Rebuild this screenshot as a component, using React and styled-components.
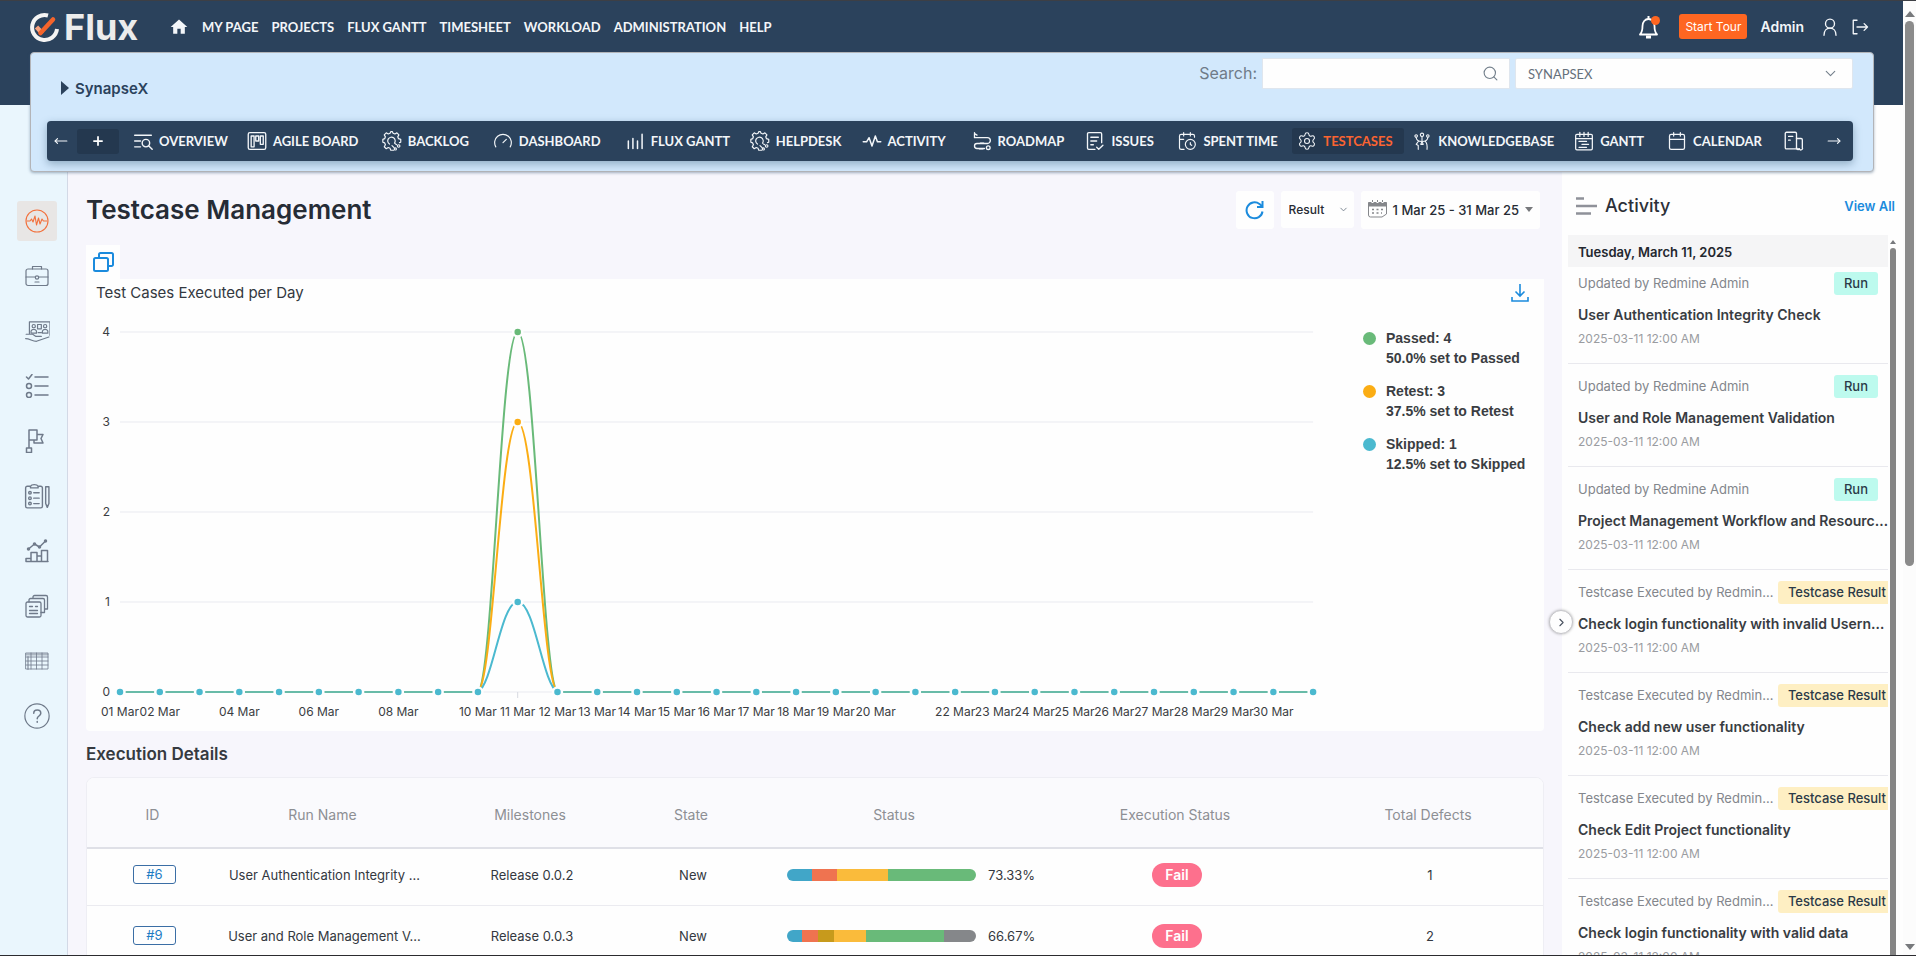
import React from "react";
import styled, { createGlobalStyle } from "styled-components";
import {
  Calendar,
  CalendarClock,
  ChevronDown,
  ChevronRight,
  Gauge,
  MoveLeft,
  MoveRight,
  Plus,
  Search,
  Settings,
} from "lucide-react";
import { MdHome } from "react-icons/md";

const GlobalStyle = createGlobalStyle`
  * {
    box-sizing: border-box;
  }

  body {
    margin: 0;
    overflow: hidden;
    font-family: Inter, "Open Sans", sans-serif;
    color: #333840;
  }

  button,
  input,
  select {
    font-family: inherit;
  }

  a {
    text-decoration: none;
  }
`;

/* ---------- page ---------- */

const Page = styled.div`
  display: flex;
  height: 100vh;
  border-top: 1px solid #3d3f45;
  border-bottom: 1px solid #2b2b2f;
`;

const Screen = styled.div`
  flex: 1;
  min-width: 0;
  display: flex;
  flex-direction: column;
  overflow: hidden;
  background: linear-gradient(#2b425c, #2b425c) 0 0 / 100% 104px no-repeat,
    linear-gradient(90deg, #eaf6fd 0 67px, #fefefe 67px);
`;

const PageScroll = styled.div`
  display: flex;
  flex-direction: column;
  justify-content: space-between;
  align-items: center;
  width: 13px;
  padding: 10px 0 5px;
  background: #fcfcfc;
`;

const Triangle = styled.span`
  border: ${(props) => props.size}px solid transparent;
  border-${(props) => (props.up ? "bottom" : "top")}: ${(props) => props.size + 1}px solid #77797c;
  border-${(props) => (props.up ? "top" : "bottom")}-width: 0;
`;

const PageThumb = styled.div`
  width: 9px;
  height: 58%;
  margin-top: 4px;
  margin-bottom: auto;
  border-radius: 5px;
  background: #8b8b8b;
`;

/* ---------- top bar ---------- */

const TopBar = styled.header`
  display: flex;
  align-items: center;
  height: 51px;
  flex-shrink: 0;
  padding: 0 34px 0 28px;
  color: #f3f6f9;
`;

const Logo = styled.a`
  display: flex;
  align-items: center;
  gap: 4px;
  width: 141px;
  font-size: 36px;
  font-weight: 700;
  line-height: 36px;
  color: #ececec;
`;

const TopNav = styled.nav`
  display: flex;
  align-items: center;
  gap: 13px;
  flex: 1;
  font-family: Lato, sans-serif;
`;

const TopLink = styled.a`
  display: flex;
  font-size: 13px;
  font-weight: 700;
  line-height: 18px;
  color: #f3f6f9;
`;

const UserTools = styled.div`
  display: flex;
  align-items: center;
`;

const IconButton = styled.button`
  display: flex;
  padding: 0;
  border: 0;
  background: none;
  color: inherit;
  cursor: pointer;

  & + & {
    margin-left: 12px;
  }
`;

const TourButton = styled.button`
  height: 25px;
  margin: 0 13px 0 18px;
  padding: 0 6px;
  border: 0;
  border-radius: 3px;
  background: #fe6621;
  color: #fff;
  font-size: 12px;
  line-height: 24px;
`;

const UserName = styled.a`
  margin-right: 17px;
  color: #f3f6f9;
  font-size: 14px;
  font-weight: 600;
`;

/* ---------- project panel ---------- */

const ProjectPanel = styled.section`
  position: relative;
  z-index: 2;
  flex-shrink: 0;
  margin: 0 29px 0 30px;
  padding: 0 20px 10px 16px;
  border: 1px solid #b3b4b8;
  border-radius: 4px;
  background: #d2e8fc;
  box-shadow: 0 1px 3px rgba(60, 90, 120, 0.45);
`;

const ProjectRow = styled.div`
  display: flex;
  justify-content: space-between;
  align-items: center;
  height: 68px;
`;

const ProjectName = styled.h2`
  display: flex;
  align-items: center;
  gap: 6px;
  margin: 2px 0 0 14px;
  font-size: 15px;
  font-weight: 600;
  color: #2b425c;

  &::before {
    content: "";
    border: 7px solid transparent;
    border-left: 8px solid #2b425c;
    border-right-width: 0;
  }
`;

const SearchArea = styled.div`
  display: flex;
  align-self: flex-start;
  padding-top: 5px;
  gap: 5px;
`;

const SearchLabel = styled.label`
  font-size: 16px;
  line-height: 30px;
  color: #6f7b88;
`;

const Field = styled.div`
  display: grid;
  align-items: center;
  width: ${(props) => props.width}px;

  > * {
    grid-area: 1 / 1;
  }

  > svg {
    justify-self: end;
    margin-right: ${(props) => props.inset}px;
    pointer-events: none;
    color: #74808c;
  }
`;

const SearchInput = styled.input`
  width: 100%;
  height: 31px;
  padding: 0 36px 0 10px;
  border: 1px solid #dfe6ee;
  background: #fefefe;
`;

const ProjectSelect = styled.select`
  width: 100%;
  height: 31px;
  padding: 0 12px;
  border: 1px solid #dfe6ee;
  border-radius: 2px;
  background: #fefefe;
  appearance: none;
  color: #66707b;
  font-family: Lato, sans-serif;
  font-size: 13px;
`;

const TabBar = styled.nav`
  display: flex;
  align-items: center;
  height: 40px;
  padding: 0 12px 0 7px;
  border-radius: 4px;
  background: #2b425c;
  box-shadow: 0 3px 8px rgba(43, 80, 110, 0.4);
  color: #f3f6f9;
`;

const AddTab = styled.button`
  display: flex;
  align-items: center;
  justify-content: center;
  width: 42px;
  height: 25px;
  margin: 0 9px;
  padding: 0;
  border: 0;
  border-radius: 3px;
  background: #24384f;
  color: #fff;
`;

const TabSlot = styled.div`
  flex: ${(props) => props.grow} 1 0;
  min-width: 0;
  display: flex;
`;

const Tab = styled.a`
  display: flex;
  align-items: center;
  gap: 6px;
  height: 26px;
  padding: 0 11px 0 5px;
  border-radius: 3px;
  font-family: Lato, sans-serif;
  font-size: 13px;
  font-weight: 700;
  white-space: nowrap;
  color: ${(props) => (props.$active ? "#fb6431" : "#f3f6f9")};
  background: ${(props) => (props.$active ? "#24384f" : "none")};

  svg {
    flex-shrink: 0;
    color: #f3f6f9;
  }
`;

/* ---------- body ---------- */

const Body = styled.div`
  display: flex;
  flex: 1;
  min-height: 0;
`;

const Sidebar = styled.nav`
  display: flex;
  flex-direction: column;
  align-items: center;
  gap: 15px;
  width: 68px;
  flex-shrink: 0;
  padding: 29px 0 0 7px;
  border-right: 1px solid #d3d9e6;
  background: #eaf6fd;
`;

const SideLink = styled.a`
  display: flex;
  align-items: center;
  justify-content: center;
  width: 40px;
  height: 40px;
  border-radius: 3px;
  color: ${(props) => (props.$active ? "#f2703c" : "#6f7a8a")};
  background: ${(props) => (props.$active ? "#e8e6e5" : "none")};
`;

const Main = styled.main`
  flex: 1;
  min-width: 0;
  padding: 18px 18px 0;
  background: #f7f6fc;
  overflow: hidden;
`;

const TitleRow = styled.div`
  display: flex;
  align-items: center;
  justify-content: space-between;
  height: 39px;
`;

const Title = styled.h1`
  margin: 0;
  font-size: 26px;
  font-weight: 600;
  line-height: 39px;
  color: #262c36;
`;

const Filters = styled.div`
  display: flex;
  align-items: center;
  gap: 7px;
  margin-right: 4px;
`;

const FilterButton = styled.button`
  display: flex;
  align-items: center;
  gap: 6px;
  height: 38px;
  padding: 0 ${(props) => props.pad}px;
  border: 0;
  border-radius: 3px;
  background: #fefefe;
  color: #262b33;
  font-size: 13px;
  font-weight: 500;
  white-space: nowrap;
`;

const ResultSelect = styled.select`
  width: 100%;
  height: 37px;
  padding: 0 8px;
  border: 0;
  border-radius: 3px;
  background: #fefefe;
  appearance: none;
  color: #262b33;
  font-size: 12px;
  font-weight: 500;
`;

const CopyTab = styled.button`
  display: flex;
  align-items: center;
  justify-content: center;
  width: 34px;
  height: 34px;
  margin-top: 16px;
  padding: 0;
  border: 0;
  background: #fefefe;
`;

const ChartCard = styled.section`
  padding: 4px 0 7px;
  border-radius: 0 0 4px 4px;
  background: #fefefe;
`;

const ChartHead = styled.div`
  display: flex;
  justify-content: space-between;
  height: 33px;
  padding: 0 15px 0 10px;
`;

const ChartTitle = styled.h3`
  margin: 0;
  font-size: 15px;
  font-weight: 400;
  line-height: 20px;
`;

const ChartBody = styled.div`
  display: grid;
  grid-template-columns: 1258fr 200fr;
`;

const Plot = styled.svg`
  display: block;
  width: 100%;

  text {
    font-size: 12px;
    fill: #3a3d42;
  }
`;

const Legend = styled.ul`
  margin: 0;
  padding: 12px 0 0 19px;
  list-style: none;
  font-family: "Liberation Sans", Arial, sans-serif;
  font-size: 14px;
  font-weight: 700;
  line-height: 20px;
  white-space: nowrap;
  color: #3a3d42;
`;

const LegendItem = styled.li`
  display: flex;
  gap: 10px;
  margin-bottom: 13px;

  &::before {
    content: "";
    width: 13px;
    height: 13px;
    margin-top: 4px;
    border-radius: 50%;
    background: ${(props) => props.color};
  }
`;

const SectionTitle = styled.h3`
  margin: 0;
  font-size: 17px;
  font-weight: 600;
  line-height: 46px;
  color: #363a40;
`;

const TableCard = styled.div`
  border: 1px solid #eeeef4;
  border-radius: 8px 8px 0 0;
  background: #fefefe;
  overflow: hidden;
`;

const Table = styled.table`
  width: 100%;
  table-layout: fixed;
  border-collapse: collapse;
  text-align: center;
  font-size: 13px;

  th {
    height: 70px;
    padding: 3px 0 0;
    border-bottom: 2px solid #dfe0e7;
    background: #fafafd;
    color: #8d8f94;
    font-size: 14px;
    font-weight: 400;
  }

  td {
    height: 61px;
    padding: 0 0 0 4px;
    border-bottom: 1px solid #ebebf0;
  }

  tbody tr:first-child td {
    height: 57px;
    padding-bottom: 4px;
  }
`;

const IdLink = styled.a`
  display: inline-block;
  width: 43px;
  border: 1px solid #3b6ea5;
  border-radius: 3px;
  line-height: 17px;
  color: #1d7cc4;
`;

const StatusCell = styled.div`
  display: flex;
  align-items: center;
  gap: 12px;
  padding-left: 34px;
`;

const Bar = styled.div`
  display: flex;
  width: 189px;
  height: 12px;
  border-radius: 6px;
  overflow: hidden;
`;

const BarPart = styled.span`
  flex: ${(props) => props.share} 1 0;
  background: ${(props) => props.color};
`;

const FailBadge = styled.span`
  display: inline-block;
  padding: 0 13px;
  border-radius: 12px;
  background: #fd708d;
  color: #fff;
  font-size: 14px;
  font-weight: 600;
  line-height: 24px;
`;

/* ---------- activity ---------- */

const ActivityPanel = styled.aside`
  position: relative;
  display: flex;
  flex-direction: column;
  width: 341px;
  flex-shrink: 0;
  padding-left: 6px;
  background: #fefefe;
`;

const CollapseButton = styled.button`
  position: absolute;
  top: 438px;
  left: -13px;
  display: flex;
  align-items: center;
  justify-content: center;
  width: 24px;
  height: 24px;
  padding: 0;
  border: 1px solid #c6c6ca;
  border-radius: 50%;
  background: #fefefe;
  box-shadow: 0 0 3px rgba(0, 0, 0, 0.3);
  color: #4a5260;
`;

const ActivityHead = styled.div`
  display: flex;
  align-items: center;
  height: 63px;
  flex-shrink: 0;
  padding: 4px 8px 0 8px;
`;

const ActivityTitle = styled.h2`
  flex: 1;
  margin: 0 0 0 8px;
  font-size: 18px;
  font-weight: 500;
  color: #2c3038;
`;

const ViewAll = styled.a`
  font-size: 13px;
  font-weight: 600;
  color: #1b8bdd;
`;

const ListFrame = styled.div`
  display: flex;
  flex: 1;
  min-height: 0;
  padding-right: 7px;
`;

const List = styled.div`
  flex: 1;
  min-width: 0;
  margin-right: 2px;
  overflow: hidden;
`;

const ListScroll = styled.div`
  display: flex;
  flex-direction: column;
  align-items: center;
  width: 6px;
  padding-top: 5px;
`;

const ListThumb = styled.div`
  width: 6px;
  flex: 1;
  margin-top: 4px;
  border-radius: 3px 3px 0 0;
  background: #858585;
`;

const DateRow = styled.div`
  padding: 2px 0 0 10px;
  background: #f5f5f6;
  font-size: 13px;
  font-weight: 600;
  line-height: 30px;
  color: #23272e;
`;

const Entry = styled.article`
  padding: 11px 0 14px 10px;
  border-bottom: 1px solid #e9e9ee;
  white-space: nowrap;

  &:nth-child(2) {
    padding-top: 5px;
  }
`;

const EntryTop = styled.div`
  display: flex;
  align-items: center;
  justify-content: space-between;
`;

const Author = styled.span`
  font-size: 13px;
  line-height: 23px;
  color: #83868c;
`;

const Tag = styled.span`
  margin-right: ${(props) => (props.run ? 10 : 0)}px;
  padding: 0 ${(props) => (props.run ? 10 : 2)}px 0 10px;
  border-radius: ${(props) => (props.run ? "3px" : "3px 0 0 3px")};
  background: ${(props) => (props.run ? "#bdfaee" : "#feefc3")};
  color: #2b3a48;
  font-size: 13px;
  font-weight: 500;
  line-height: 23px;
`;

const EntryTitle = styled.h4`
  margin: 9px 0 3px;
  font-size: 14px;
  font-weight: 600;
  line-height: 22px;
  color: #383c42;
`;

const EntryTime = styled.time`
  display: block;
  font-size: 12px;
  line-height: 20px;
  color: #9a9ca1;
`;

/* ---------- icons ---------- */

const Icon = ({ size = 20, width = 1.3, box = 24, children }) => (
  <svg
    width={size}
    height={size}
    viewBox={`0 0 ${box} ${box}`}
    fill="none"
    stroke="currentColor"
    strokeWidth={width}
    strokeLinecap="round"
    strokeLinejoin="round"
    aria-hidden="true"
  >
    {children}
  </svg>
);

const LogoMark = () => (
  <svg width="32" height="32" viewBox="0 0 32 32" fill="none" aria-hidden="true">
    <path d="M20 4.500A12.500 12.500 0 1 0 29 18" stroke="#f4f4f4" strokeWidth="4" />
    <path d="M8.500 16l6 6.500" stroke="#f9a27e" strokeWidth="4.500" />
    <path d="M12.500 22L25 8.500" stroke="#f5642b" strokeWidth="4.500" strokeLinecap="round" />
  </svg>
);

const BellIcon = () => (
  <svg width="24" height="28" viewBox="0 0 24 28" fill="none" aria-hidden="true">
    <path
      d="M3 21.500h17c-2-2-2.500-4-2.500-8.500 0-4-2.500-7-6-7s-6 3-6 7c0 4.500-.500 6.500-2.500 8.500z"
      stroke="#fff"
      strokeWidth="1.800"
      strokeLinejoin="round"
    />
    <path d="M11.500 3v3" stroke="#fff" strokeWidth="2" />
    <path d="M9 24h5" stroke="#fff" strokeWidth="3" />
    <circle cx="18.500" cy="7.500" r="4.500" fill="#fe6621" />
  </svg>
);

const UserIcon = () => (
  <Icon size={18} width={1.8}>
    <circle cx="12" cy="7.500" r="6" />
    <path d="M4 23c0-6 3.500-9.500 8-9.500s8 3.500 8 9.500" />
  </Icon>
);

const LogoutIcon = () => (
  <Icon size={18} width={1.8}>
    <path d="M8 3H3v18h5M8 12h14M17.500 7.500L22 12l-4.500 4.500" />
  </Icon>
);

const OverviewIcon = () => (
  <Icon width={1.7}>
    <path d="M2 5h20M2 12h7M2 19h7" />
    <circle cx="15.500" cy="14.500" r="4.500" />
    <path d="M19 18l4 4" />
  </Icon>
);

const BoardIcon = () => (
  <Icon width={1.6}>
    <rect x="1.500" y="2" width="21" height="20" rx="2" />
    <path d="M5 6h3.500v13H5zM10.500 6h3.500v6h-3.500zM16 6h3.500v10H16z" />
  </Icon>
);

/* toothed wheel with an open lower right corner */
const GearIcon = () => (
  <Icon width={1.4}>
    <path d="M21 14l1.500-.500v-3.500l-2.700-.800-.900-2.200 1.400-2.400-2.400-2.400L15.500 3.600l-2.200-.900L12.500 0.800h-2l-.800 1.900-2.200.900-2.400-1.400-2.400 2.400 1.400 2.400-.900 2.200-2.200.800v3.500l2.200.800.900 2.200-1.400 2.400 2.400 2.400 2.400-1.400 2.200.900.800 2.300h3.500" />
    <path d="M15 14.500a4.500 4.500 0 1 0-6 1.200M15 14.500l2.500 2M12 17.500l2.500 2.500" />
    <circle cx="20" cy="18" r="1.500" />
    <circle cx="16" cy="21.500" r="1.300" />
  </Icon>
);

const BarsIcon = () => (
  <Icon width={1.8}>
    <path d="M4 12v9M9.500 9v12M15 12v9M20.500 4v17" />
  </Icon>
);

const PulseIcon = () => (
  <Icon width={1.8}>
    <path d="M1.500 13h4l3-5 3.500 10 4-12 2.500 7h4" />
  </Icon>
);

const RoadmapIcon = () => (
  <Icon width={1.6}>
    <path d="M3 2v6h15.500a3.500 3.500 0 0 1 0 7H6a3 3 0 0 0 0 6h9M3 3l3 2" />
    <circle cx="19.500" cy="20" r="2.200" />
    <path d="M10 14.500h4M9 21.500h4" />
  </Icon>
);

const IssuesIcon = () => (
  <Icon width={1.6}>
    <path d="M12 22H4.500A1.500 1.500 0 0 1 3 20.500v-17A1.500 1.500 0 0 1 4.500 2h14A1.500 1.500 0 0 1 20 3.500V14" />
    <path d="M7 7.500h9M7 12h7M7 16.500h3M14 19.500l2.500 2.500 5-5" />
  </Icon>
);

const KnowledgeIcon = () => (
  <Icon width={1.3}>
    <circle cx="12" cy="4.500" r="2" />
    <circle cx="5" cy="6" r="1.500" />
    <circle cx="19" cy="6" r="1.500" />
    <path d="M12 6.500v6M5 7.500c0 4 3 5 7 5s7-1 7-5M8 12l-3 4 2.500 1.500V22M16 12.500c2 2 2.500 5 2 9.500M12 13l-1.500 3h3z" />
  </Icon>
);

const GanttIcon = () => (
  <Icon width={1.5}>
    <rect x="2" y="4" width="20" height="18.500" rx="1.500" />
    <path d="M2 9h20M7 1.500v5M12 1.500v5M17 1.500v5M6 12.500h9M9.500 16h8M6 19.500h9" />
  </Icon>
);

const NewsIcon = () => (
  <Icon width={1.6}>
    <path d="M18.500 21.500H3A1.500 1.500 0 0 1 1.500 20V3A1.500 1.500 0 0 1 3 1.500h10.500A1.500 1.500 0 0 1 15 3v17" />
    <path d="M15 9h5.500A1.500 1.500 0 0 1 22 10.500V20a1.500 1.500 0 0 1-3.500 1.500A2 2 0 0 1 15 20M5.500 6.500h5M5.500 11h2" />
  </Icon>
);

const sideIcons = {
  Activity: (
    <Icon size={24} width={1.1}>
      <circle cx="12" cy="12" r="11" />
      <path d="M2 12h3l1.500-2 1.500 3 2-6 1.500 9 2-7 1.500 6 2-5 1.500 2H22" />
    </Icon>
  ),
  Projects: (
    <Icon size={24} width={1.2}>
      <rect x="1" y="5" width="22" height="16.500" rx="2" />
      <path d="M7.500 5V2.500h9V5M1 13h9.500M13.500 13H23M10 18h4" />
      <circle cx="12" cy="13.500" r="1.700" />
    </Icon>
  ),
  Resources: (
    <Icon size={26} width={1.1}>
      <path d="M5 14V3.500h19V16M2 15h6l3 2h5M1.500 19c4 0 6 2.500 10 2.500L23 17.500" />
      <circle cx="9" cy="7.500" r="1.500" />
      <circle cx="19.500" cy="7.500" r="1.500" />
      <path d="M6.500 14v-2c1-2 4-2 5 0v2zM17 14v-2c1-2 4-2 5 0v2zM12.500 6h3.500v4h-3.500zM13 13.500h3" />
    </Icon>
  ),
  Tasks: (
    <Icon size={24} width={1.5}>
      <path d="M1.500 3L3.500 5l3.500-4.500M10 3h13M10 12h13M10 21h13" />
      <circle cx="4" cy="12" r="2.500" />
      <circle cx="4" cy="21" r="2.500" />
    </Icon>
  ),
  Milestones: (
    <Icon size={24} width={1.5}>
      <path d="M4 18.500V1h8v10H4M1.500 19h5v4.500h-5zM12 5.500h6l-2 4 2 4.500h-9v-3" />
    </Icon>
  ),
  Reports: (
    <Icon size={26} width={1.3}>
      <path d="M6 3H3a1.500 1.500 0 0 0-1.500 1.500v17A1.500 1.500 0 0 0 3 23h12.500a1.500 1.500 0 0 0 1.500-1.500v-17A1.500 1.500 0 0 0 15.500 3H13c-1-2-6-2-7 0v1.500h7V3M20 3.500h3V19l-1.500 3.500L20 19z" />
      <circle cx="5.500" cy="9" r="1.200" />
      <circle cx="5.500" cy="14" r="1.200" />
      <circle cx="5.500" cy="19" r="1.200" />
      <path d="M9 9h5M9 14h5M9 19h5" />
    </Icon>
  ),
  Analytics: (
    <Icon size={24} width={1.5}>
      <path d="M1 22.500v-3h5v3zM6 22.500v-9h6v9zM12 22.500V17h4.500v5.500zM16.500 22.500v-11H22.500v11zM1 22.500h22M3.500 10l6-5 5 3L21 1.500" />
      <circle cx="3.500" cy="10" r="1" />
      <circle cx="9.500" cy="5" r="1" />
      <circle cx="14.500" cy="8" r="1" />
      <circle cx="20.500" cy="2" r="1" />
    </Icon>
  ),
  Documents: (
    <Icon size={24} width={1.3}>
      <rect x="1" y="8" width="15" height="15" rx="1.500" />
      <path d="M4 8V6A1.500 1.500 0 0 1 5.500 4.500H18A1.500 1.500 0 0 1 19.500 6v12.500H16M8 4.500V3a1.500 1.500 0 0 1 1.500-1.500H21A1.500 1.500 0 0 1 22.500 3v12h-3M4.500 12.500h3M10.500 12.500h2M4.500 16.500h8M4.500 19.500h8" />
    </Icon>
  ),
  Tables: (
    <Icon size={24} width={0.8}>
      <rect x="1" y="4" width="22" height="16" />
      <path d="M1 8h22M1 12h22M1 16h22M6 4v16M11.500 4v16M17 4v16" />
      <path d="M1.500 5.500h21M3 8v12" strokeWidth="2" strokeOpacity="0.5" />
    </Icon>
  ),
  Help: (
    <Icon size={26} width={1.1}>
      <circle cx="12" cy="12" r="11.200" />
      <path d="M9 9.500c0-4 6.500-4 6.500 0 0 2.500-3.300 2.500-3.300 5M12.200 17v.700" strokeWidth="1.400" />
    </Icon>
  ),
};

/* ---------- data ---------- */

const topLinks = [
  "MY PAGE",
  "PROJECTS",
  "FLUX GANTT",
  "TIMESHEET",
  "WORKLOAD",
  "ADMINISTRATION",
  "HELP",
];

const tabs = [
  { name: "OVERVIEW", grow: 114, icon: <OverviewIcon /> },
  { name: "AGILE BOARD", grow: 135, icon: <BoardIcon /> },
  { name: "BACKLOG", grow: 111, icon: <GearIcon /> },
  { name: "DASHBOARD", grow: 132, icon: <Gauge size={20} strokeWidth={1.4} /> },
  { name: "FLUX GANTT", grow: 125, icon: <BarsIcon /> },
  { name: "HELPDESK", grow: 112, icon: <GearIcon /> },
  { name: "ACTIVITY", grow: 110, icon: <PulseIcon /> },
  { name: "ROADMAP", grow: 114, icon: <RoadmapIcon /> },
  { name: "ISSUES", grow: 92, icon: <IssuesIcon /> },
  { name: "SPENT TIME", grow: 120, icon: <CalendarClock size={20} strokeWidth={1.4} /> },
  { name: "TESTCASES", grow: 115, icon: <Settings size={20} strokeWidth={1.3} />, active: true },
  { name: "KNOWLEDGEBASE", grow: 162, icon: <KnowledgeIcon /> },
  { name: "GANTT", grow: 93, icon: <GanttIcon /> },
  { name: "CALENDAR", grow: 117, icon: <Calendar size={20} strokeWidth={1.5} /> },
  { name: "", grow: 48, icon: <NewsIcon /> },
];

const green = "#69ba79";
const yellow = "#fbad14";
const teal = "#4bb9cf";

const legend = [
  { color: green, name: "Passed: 4", note: "50.0% set to Passed" },
  { color: yellow, name: "Retest: 3", note: "37.5% set to Retest" },
  { color: teal, name: "Skipped: 1", note: "12.5% set to Skipped" },
];

const labelledDays = [
  1, 2, 4, 6, 8, 10, 11, 12, 13, 14, 15, 16, 17, 18, 19, 20, 22, 23, 24, 25, 26, 27, 28, 29, 30,
];

const columns = [
  { name: "ID", width: 131 },
  { name: "Run Name", width: 209 },
  { name: "Milestones", width: 206 },
  { name: "State", width: 116 },
  { name: "Status", width: 290 },
  { name: "Execution Status", width: 272 },
  { name: "Total Defects", width: 234 },
];

const runs = [
  {
    id: "#6",
    name: "User Authentication Integrity ...",
    release: "Release 0.0.2",
    percent: "73.33%",
    defects: 1,
    parts: [
      ["#41a6c8", 25],
      ["#ef7350", 25],
      ["#fabb3b", 51],
      [green, 88],
    ],
  },
  {
    id: "#9",
    name: "User and Role Management V...",
    release: "Release 0.0.3",
    percent: "66.67%",
    defects: 2,
    parts: [
      ["#41a6c8", 15],
      ["#ef7350", 16],
      ["#c79a1c", 16],
      ["#fabb3b", 32],
      [green, 78],
      ["#85878a", 32],
    ],
  },
];

const entries = [
  { run: true, title: "User Authentication Integrity Check" },
  { run: true, title: "User and Role Management Validation" },
  { run: true, title: "Project Management Workflow and Resourc…" },
  { title: "Check login functionality with invalid Usern…" },
  { title: "Check add new user functionality" },
  { title: "Check Edit Project functionality" },
  { title: "Check login functionality with valid data" },
];

/* ---------- chart ---------- */

const dayX = (day) => 34 + (day - 1) * 39.77;
const valueY = (value) => 376 - value * 90;
const days = Array.from({ length: 31 }, (_, i) => i + 1);

const peak = (value) => {
  const top = valueY(value);
  const bottom = valueY(0);
  const [a, b, c] = [dayX(10), dayX(11), dayX(12)];
  return `M${a} ${bottom} C${a + 15} ${bottom - 8} ${b - 17} ${top} ${b} ${top} S${c - 15} ${bottom - 8} ${c} ${bottom}`;
};

const Dot = ({ x, y, color }) => (
  <circle cx={x} cy={y} r="4.500" fill={color} stroke="#fefefe" strokeWidth="2.500" />
);

const Chart = () => (
  <Plot viewBox="0 0 1258 408" role="img" aria-label="Test cases executed per day">
    {[0, 1, 2, 3, 4].map((value) => (
      <g key={value}>
        <line x1={dayX(1)} x2={dayX(31)} y1={valueY(value)} y2={valueY(value)} stroke="#e9eaf0" />
        <text x="24" y={valueY(value) + 4} textAnchor="end">
          {value}
        </text>
      </g>
    ))}
    <line x1={dayX(11)} x2={dayX(11)} y1={valueY(0)} y2={valueY(0) + 6} stroke="#d7d9e0" />
    <path
      d={`M${dayX(1)} ${valueY(0)}H${dayX(10)}M${dayX(12)} ${valueY(0)}H${dayX(31)}`}
      stroke="#68bba8"
      strokeWidth="2"
    />
    <path d={peak(4)} fill="none" stroke={green} strokeWidth="2" />
    <path d={peak(3)} fill="none" stroke={yellow} strokeWidth="2" />
    <path d={peak(1)} fill="none" stroke={teal} strokeWidth="2" />
    <Dot x={dayX(11)} y={valueY(4)} color={green} />
    <Dot x={dayX(11)} y={valueY(3)} color={yellow} />
    {days.map((day) => (
      <Dot key={day} x={dayX(day)} y={valueY(day === 11 ? 1 : 0)} color={teal} />
    ))}
    {labelledDays.map((day) => (
      <text key={day} x={dayX(day)} y="400" textAnchor="middle">
        {String(day).padStart(2, "0")} Mar
      </text>
    ))}
  </Plot>
);

/* ---------- sections ---------- */

function Header() {
  return (
    <TopBar>
      <Logo href="#">
        <LogoMark />
        Flux
      </Logo>
      <TopNav>
        <TopLink href="#" aria-label="Home">
          <MdHome size={20} />
        </TopLink>
        {topLinks.map((link) => (
          <TopLink href="#" key={link}>
            {link}
          </TopLink>
        ))}
      </TopNav>
      <UserTools>
        <IconButton aria-label="Notifications">
          <BellIcon />
        </IconButton>
        <TourButton>Start Tour</TourButton>
        <UserName href="#">Admin</UserName>
        <IconButton aria-label="Profile">
          <UserIcon />
        </IconButton>
        <IconButton aria-label="Sign out">
          <LogoutIcon />
        </IconButton>
      </UserTools>
    </TopBar>
  );
}

function Project() {
  return (
    <ProjectPanel>
      <ProjectRow>
        <ProjectName>SynapseX</ProjectName>
        <SearchArea>
          <SearchLabel htmlFor="search">Search:</SearchLabel>
          <Field width={248} inset={11}>
            <SearchInput id="search" type="text" />
            <Search size={17} strokeWidth={1.6} />
          </Field>
          <Field width={338} inset={14}>
            <ProjectSelect aria-label="Project">
              <option>SYNAPSEX</option>
            </ProjectSelect>
            <ChevronDown size={17} strokeWidth={1.6} />
          </Field>
        </SearchArea>
      </ProjectRow>
      <TabBar>
        <IconButton aria-label="Previous tabs">
          <MoveLeft size={14} />
        </IconButton>
        <AddTab aria-label="Add">
          <Plus size={14} strokeWidth={3} />
        </AddTab>
        {tabs.map((tab, i) => (
          <TabSlot grow={tab.grow} key={i}>
            <Tab href="#" $active={tab.active} aria-label={tab.name || "News"}>
              {tab.icon}
              {tab.name}
            </Tab>
          </TabSlot>
        ))}
        <IconButton aria-label="Next tabs">
          <MoveRight size={14} />
        </IconButton>
      </TabBar>
    </ProjectPanel>
  );
}

function Toolbar() {
  return (
    <TitleRow>
      <Title>Testcase Management</Title>
      <Filters>
        <FilterButton pad={9} aria-label="Refresh">
          <svg width="20" height="20" viewBox="0 0 20 20" fill="none" stroke="#1b8bdd" strokeWidth="2">
            <path d="M17.500 11.500A8 8 0 1 1 14.500 4l2.500 2" />
            <path d="M17.500 1v6H12" />
          </svg>
        </FilterButton>
        <Field width={73} inset={5}>
          <ResultSelect aria-label="Result">
            <option>Result</option>
          </ResultSelect>
          <ChevronDown size={11} strokeWidth={2} />
        </Field>
        <FilterButton pad={7}>
          <svg width="19" height="19" viewBox="0 0 19 19" fill="none" stroke="#85878b" aria-hidden="true">
            <path d="M.500 2.500h18v3.500H.500z" fill="#85878b" />
            <path d="M.500 6v9a2 2 0 0 0 2 2H14l4.500-3V6" />
            <path d="M4.500 0v3M9.500 0v3M14.500 0v3" stroke="#fff" strokeWidth="2" />
            <path d="M4.500 0v2M9.500 0v2M14.500 0v2" />
            <path d="M4 9.500h2m2.500 0h2m2.500 0h2M4 13h2m2.500 0h2m2.500 0h1" strokeWidth="1.500" />
          </svg>
          1 Mar 25 - 31 Mar 25
          <Triangle size={4} />
        </FilterButton>
      </Filters>
    </TitleRow>
  );
}

function Runs() {
  return (
    <TableCard>
      <Table>
        <colgroup>
          {columns.map((column) => (
            <col key={column.name} width={column.width} />
          ))}
        </colgroup>
        <thead>
          <tr>
            {columns.map((column) => (
              <th key={column.name}>{column.name}</th>
            ))}
          </tr>
        </thead>
        <tbody>
          {runs.map((run) => (
            <tr key={run.id}>
              <td>
                <IdLink href="#">{run.id}</IdLink>
              </td>
              <td>{run.name}</td>
              <td>{run.release}</td>
              <td>New</td>
              <td>
                <StatusCell>
                  <Bar>
                    {run.parts.map(([color, share]) => (
                      <BarPart key={color} color={color} share={share} />
                    ))}
                  </Bar>
                  {run.percent}
                </StatusCell>
              </td>
              <td>
                <FailBadge>Fail</FailBadge>
              </td>
              <td>{run.defects}</td>
            </tr>
          ))}
        </tbody>
      </Table>
    </TableCard>
  );
}

function ActivityFeed() {
  return (
    <ActivityPanel>
      <CollapseButton aria-label="Collapse activity">
        <ChevronRight size={13} />
      </CollapseButton>
      <ActivityHead>
        <svg width="21" height="18" viewBox="0 0 21 18" stroke="#8f9199" strokeWidth="2.500" aria-hidden="true">
          <path d="M0 1.500h8M0 9h21M0 16.500h15" />
        </svg>
        <ActivityTitle>Activity</ActivityTitle>
        <ViewAll href="#">View All</ViewAll>
      </ActivityHead>
      <ListFrame>
        <List>
          <DateRow>Tuesday, March 11, 2025</DateRow>
          {entries.map((entry) => (
            <Entry key={entry.title}>
              <EntryTop>
                <Author>
                  {entry.run ? "Updated by Redmine Admin" : "Testcase Executed by Redmin…"}
                </Author>
                <Tag run={entry.run ? 1 : 0}>{entry.run ? "Run" : "Testcase Result"}</Tag>
              </EntryTop>
              <EntryTitle>{entry.title}</EntryTitle>
              <EntryTime>2025-03-11 12:00 AM</EntryTime>
            </Entry>
          ))}
        </List>
        <ListScroll>
          <Triangle up size={3} />
          <ListThumb />
        </ListScroll>
      </ListFrame>
    </ActivityPanel>
  );
}

export default function App() {
  return (
    <Page>
      <GlobalStyle />
      <Screen>
        <Header />
        <Project />
        <Body>
          <Sidebar>
            {Object.keys(sideIcons).map((name, i) => (
              <SideLink href="#" key={name} $active={i === 0} aria-label={name}>
                {sideIcons[name]}
              </SideLink>
            ))}
          </Sidebar>
          <Main>
            <Toolbar />
            <CopyTab aria-label="Copy">
              <svg width="21" height="20" viewBox="0 0 21 20" fill="none" stroke="#1b8bdd" strokeWidth="2">
                <rect x="1" y="6" width="14" height="13" rx="1.500" />
                <path d="M6 6V2.500A1.500 1.500 0 0 1 7.500 1h11A1.500 1.500 0 0 1 20 2.500v10a1.500 1.500 0 0 1-1.500 1.500H15" />
              </svg>
            </CopyTab>
            <ChartCard>
              <ChartHead>
                <ChartTitle>Test Cases Executed per Day</ChartTitle>
                <IconButton aria-label="Download">
                  <svg width="18" height="20" viewBox="0 0 18 20" fill="none" stroke="#1b8bdd" strokeWidth="1.600">
                    <path d="M9 1v12M4.500 8.500L9 13l4.500-4.500M1 14v4h16v-4" />
                  </svg>
                </IconButton>
              </ChartHead>
              <ChartBody>
                <Chart />
                <Legend>
                  {legend.map((item) => (
                    <LegendItem color={item.color} key={item.name}>
                      <div>
                        {item.name}
                        <br />
                        {item.note}
                      </div>
                    </LegendItem>
                  ))}
                </Legend>
              </ChartBody>
            </ChartCard>
            <SectionTitle>Execution Details</SectionTitle>
            <Runs />
          </Main>
          <ActivityFeed />
        </Body>
      </Screen>
      <PageScroll>
        <Triangle up size={5} />
        <PageThumb />
        <Triangle size={5} />
      </PageScroll>
    </Page>
  );
}
